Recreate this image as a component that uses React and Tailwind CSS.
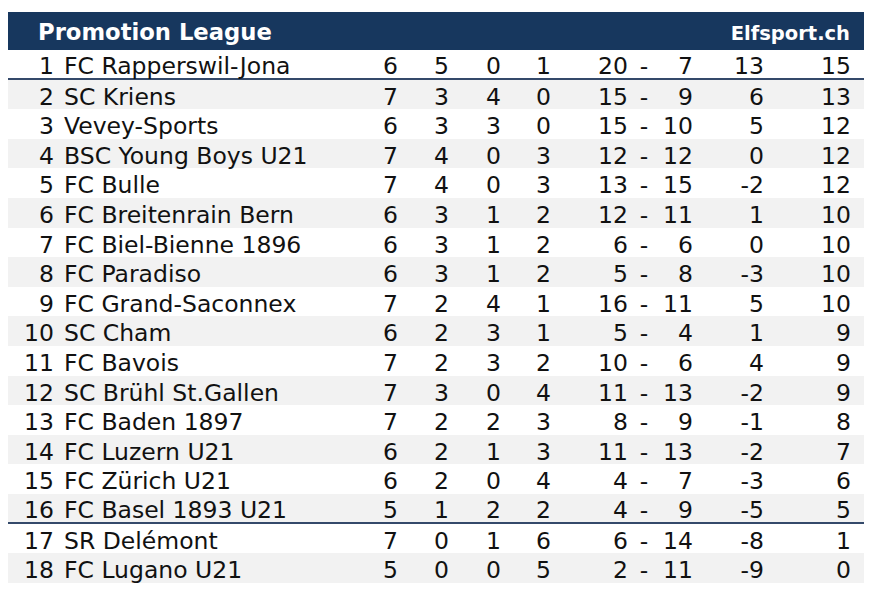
const rows = [
  [1, "FC Rapperswil-Jona", 6, 5, 0, 1, 20, 7, 13, 15],
  [2, "SC Kriens", 7, 3, 4, 0, 15, 9, 6, 13],
  [3, "Vevey-Sports", 6, 3, 3, 0, 15, 10, 5, 12],
  [4, "BSC Young Boys U21", 7, 4, 0, 3, 12, 12, 0, 12],
  [5, "FC Bulle", 7, 4, 0, 3, 13, 15, -2, 12],
  [6, "FC Breitenrain Bern", 6, 3, 1, 2, 12, 11, 1, 10],
  [7, "FC Biel-Bienne 1896", 6, 3, 1, 2, 6, 6, 0, 10],
  [8, "FC Paradiso", 6, 3, 1, 2, 5, 8, -3, 10],
  [9, "FC Grand-Saconnex", 7, 2, 4, 1, 16, 11, 5, 10],
  [10, "SC Cham", 6, 2, 3, 1, 5, 4, 1, 9],
  [11, "FC Bavois", 7, 2, 3, 2, 10, 6, 4, 9],
  [12, "SC Brühl St.Gallen", 7, 3, 0, 4, 11, 13, -2, 9],
  [13, "FC Baden 1897", 7, 2, 2, 3, 8, 9, -1, 8],
  [14, "FC Luzern U21", 6, 2, 1, 3, 11, 13, -2, 7],
  [15, "FC Zürich U21", 6, 2, 0, 4, 4, 7, -3, 6],
  [16, "FC Basel 1893 U21", 5, 1, 2, 2, 4, 9, -5, 5],
  [17, "SR Delémont", 7, 0, 1, 6, 6, 14, -8, 1],
  [18, "FC Lugano U21", 5, 0, 0, 5, 2, 11, -9, 0],
];

function Row({ r }) {
  const [rank, name, sp, w, d, l, gf, ga, diff, pts] = r;
  const gray = rank % 2 === 0;
  const line = rank === 1 || rank === 16;
  return (
    <div
      className={
        "flex items-center h-[29.6px] w-[856px] pt-[6px] " +
        (gray ? "bg-[#f2f2f2] " : "bg-white ") +
        (line ? "border-b-2 border-[#34496a]" : "")
      }
    >
      <div className="w-[46px] text-right">{rank}</div>
      <div className="w-[306px] pl-[10px] whitespace-nowrap">{name}</div>
      <div className="w-[38px] text-right">{sp}</div>
      <div className="w-[51px] text-right">{w}</div>
      <div className="w-[52px] text-right">{d}</div>
      <div className="w-[50px] text-right">{l}</div>
      <div className="w-[77px] text-right">{gf}</div>
      <div className="w-[32px] text-center">-</div>
      <div className="w-[33px] text-right">{ga}</div>
      <div className="w-[71px] text-right">{diff}</div>
      <div className="w-[87px] text-right">{pts}</div>
    </div>
  );
}

export default function App() {
  return (
    <div
      className="w-[874px] h-[597px] bg-white pt-[12px] pl-[8px] text-[#111] text-[23.5px] leading-none"
      style={{ fontFamily: '"DejaVu Sans", Verdana, sans-serif' }}
    >
      <div className="flex items-center justify-between h-[38px] w-[856px] bg-[#17375e] pl-[30px] pr-[14px] pt-[3px] text-white font-bold">
        <span className="text-[22.7px]">Promotion League</span>
        <span className="text-[19.5px] pt-[2px]">Elfsport.ch</span>
      </div>
      {rows.map((r) => (
        <Row key={r[0]} r={r} />
      ))}
    </div>
  );
}
